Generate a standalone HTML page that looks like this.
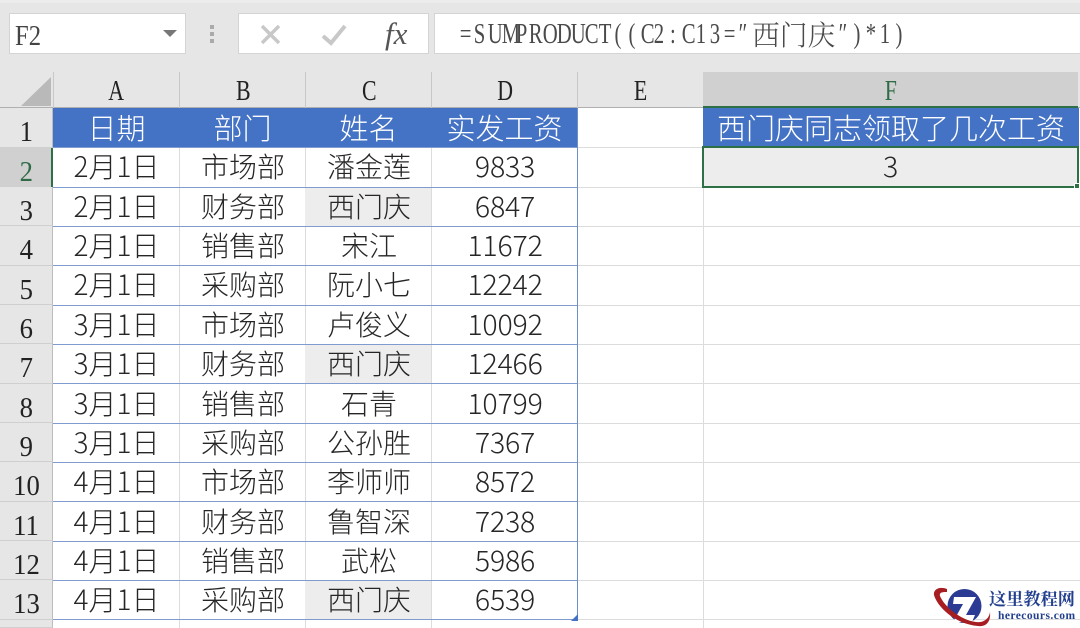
<!DOCTYPE html>
<html><head><meta charset="utf-8">
<style>
html,body{margin:0;padding:0;background:#fff}
#p{position:relative;width:1080px;height:628px;overflow:hidden;background:#fff;font-family:"Noto Sans CJK SC","Liberation Sans",sans-serif;color:#222}
#p div{position:absolute;box-sizing:border-box}
.c{text-align:center;font-size:28px;font-weight:300;line-height:36px;height:39px;white-space:nowrap;color:#262626}
.n{font-size:28.5px;letter-spacing:-.2px}
.h{color:#fff;background:#4472c4;line-height:38px!important;font-size:29px}
.ch{top:72px;height:36px;line-height:40px;text-align:center;font-family:"Liberation Serif","Noto Serif CJK SC",serif;font-size:28px;color:#222}
.ch span{display:inline-block;transform:scaleX(.78)}
.rh span{display:inline-block;transform:scaleX(.92)}
.rh{left:0;width:53px;background:#e6e6e6;text-align:center;font-family:"Liberation Serif",serif;font-size:29px;color:#222;border-bottom:1px solid #cfcfcf;border-right:1px solid #bdbdbd;line-height:48px;overflow:hidden}
.hl{height:1px;background:#dcdcdc}
.vl{width:1px;background:#dcdcdc}
.b{height:1px;background:#7f9bd0;left:53px;width:525px}
.f span{display:inline-block;width:13.9px;text-align:center;transform:scaleX(.74)}
.f{font:28px/36px "Liberation Serif",serif;color:#4a4a4a;white-space:nowrap}
</style></head><body><div id="p">
<div style="left:0;top:0;width:1080px;height:108px;background:#e6e6e6"></div>
<div style="left:0;top:0;width:1080px;height:3px;background:#ececec"></div>

<div style="left:9px;top:13px;width:177px;height:41px;background:#fff;border:1px solid #d4d4d4"></div>
<div style="left:15px;top:18px;font:29px/36px 'Liberation Serif',serif;color:#444;transform:scaleX(.85);transform-origin:left">F2</div>
<div style="left:163px;top:30px;width:0;height:0;border-left:7px solid transparent;border-right:7px solid transparent;border-top:7px solid #777"></div>
<div style="left:210px;top:25px;width:4px;height:4px;background:#aaa"></div>
<div style="left:210px;top:32px;width:4px;height:4px;background:#aaa"></div>
<div style="left:210px;top:39px;width:4px;height:4px;background:#aaa"></div>
<div style="left:238px;top:13px;width:191px;height:41px;background:#fff;border:1px solid #d4d4d4"></div>
<svg style="position:absolute;left:0;top:0" width="430" height="60"><path d="M262 26L279 43M279 26L262 43" stroke="#c8c8c8" stroke-width="3.4" fill="none"/><path d="M323 36L331 43L345 26" stroke="#c8c8c8" stroke-width="4" fill="none"/></svg>
<div style="left:385px;top:16px;font:italic 31px/36px 'Liberation Serif',serif;color:#555">fx</div>
<div style="left:434px;top:13px;width:646px;height:41px;background:#fff;border:1px solid #d4d4d4;border-right:0"></div>
<div class="f" style="left:458px;top:17px"><span>=</span><span>S</span><span>U</span><span>M</span><span>P</span><span>R</span><span>O</span><span>D</span><span>U</span><span>C</span><span>T</span><span>(</span><span>(</span><span>C</span><span>2</span><span>:</span><span>C</span><span>1</span><span>3</span><span>=</span><span>″</span></div>
<div style="left:752px;top:14px;font:27.8px/38px 'Noto Serif CJK SC',serif;font-weight:300;color:#4a4a4a;white-space:nowrap">西门庆</div>
<div class="f" style="left:836px;top:17px"><span>″</span><span>)</span><span>*</span><span>1</span><span>)</span></div>

<!-- col headers -->
<div style="left:21px;top:77px;width:0;height:0;border-left:30px solid transparent;border-bottom:29px solid #b9b9b9"></div>
<div class="ch" style="left:53px;width:127px"><span>A</span></div>
<div class="ch" style="left:180px;width:126px"><span>B</span></div>
<div class="ch" style="left:306px;width:126px"><span>C</span></div>
<div class="ch" style="left:432px;width:146px"><span>D</span></div>
<div class="ch" style="left:578px;width:125px"><span>E</span></div>
<div class="ch" style="left:703px;width:375px;background:#d0d0d0;color:#2f6b47;top:72px"><span>F</span></div>
<div style="left:0;top:107px;width:1080px;height:1px;background:#b0b0b0"></div>
<div class="vl" style="left:53px;top:72px;height:36px;background:#c8c8c8"></div>
<div class="vl" style="left:179px;top:72px;height:36px;background:#c8c8c8"></div>
<div class="vl" style="left:305px;top:72px;height:36px;background:#c8c8c8"></div>
<div class="vl" style="left:431px;top:72px;height:36px;background:#c8c8c8"></div>
<div class="vl" style="left:577px;top:72px;height:36px;background:#c8c8c8"></div>

<!-- row headers -->
<div class="rh" style="top:108px;height:40px"><span>1</span></div>
<div class="rh" style="top:148px;height:39px;background:#d0d0d0;color:#2f6b47"><span>2</span></div>
<div class="rh" style="top:187px;height:39px"><span>3</span></div>
<div class="rh" style="top:226px;height:40px"><span>4</span></div>
<div class="rh" style="top:266px;height:39px"><span>5</span></div>
<div class="rh" style="top:305px;height:39px"><span>6</span></div>
<div class="rh" style="top:344px;height:40px"><span>7</span></div>
<div class="rh" style="top:384px;height:39px"><span>8</span></div>
<div class="rh" style="top:423px;height:39px"><span>9</span></div>
<div class="rh" style="top:462px;height:40px"><span>10</span></div>
<div class="rh" style="top:502px;height:39px"><span>11</span></div>
<div class="rh" style="top:541px;height:39px"><span>12</span></div>
<div class="rh" style="top:580px;height:40px"><span>13</span></div>
<div class="rh" style="top:620px;height:8px"></div>

<!-- grid -->
<div class="vl" style="left:179px;top:148px;height:480px"></div>
<div class="vl" style="left:305px;top:148px;height:480px"></div>
<div class="vl" style="left:431px;top:148px;height:480px"></div>
<div class="vl" style="left:703px;top:108px;height:520px"></div>
<div class="hl" style="left:578px;top:147px;width:125px"></div>
<div class="hl" style="left:578px;top:187px;width:502px"></div>
<div class="hl" style="left:578px;top:226px;width:502px"></div>
<div class="hl" style="left:578px;top:265px;width:502px"></div>
<div class="hl" style="left:578px;top:305px;width:502px"></div>
<div class="hl" style="left:578px;top:344px;width:502px"></div>
<div class="hl" style="left:578px;top:383px;width:502px"></div>
<div class="hl" style="left:578px;top:423px;width:502px"></div>
<div class="hl" style="left:578px;top:462px;width:502px"></div>
<div class="hl" style="left:578px;top:501px;width:502px"></div>
<div class="hl" style="left:578px;top:541px;width:502px"></div>
<div class="hl" style="left:578px;top:580px;width:502px"></div>
<div class="hl" style="left:53px;top:619px;width:1027px"></div>

<!-- header row -->
<div class="c h" style="left:53px;top:108px;width:127px;height:40px">日期</div>
<div class="c h" style="left:179px;top:108px;width:127px;height:40px">部门</div>
<div class="c h" style="left:305px;top:108px;width:127px;height:40px">姓名</div>
<div class="c h" style="left:431px;top:108px;width:147px;height:40px">实发工资</div>
<div class="c h" style="left:703px;top:108px;width:376px;height:40px">西门庆同志领取了几次工资</div>

<!-- highlights -->
<div style="left:305px;top:188px;width:126px;height:38px;background:#ededed"></div>
<div style="left:305px;top:345px;width:126px;height:39px;background:#ededed"></div>
<div style="left:305px;top:581px;width:126px;height:38px;background:#ededed"></div>

<!-- rows -->
<div class="c" style="left:53px;top:148px;width:127px">2月1日</div><div class="c" style="left:180px;top:148px;width:126px">市场部</div><div class="c" style="left:306px;top:148px;width:126px">潘金莲</div><div class="c n" style="left:432px;top:148px;width:146px">9833</div>
<div class="c" style="left:53px;top:188px;width:127px">2月1日</div><div class="c" style="left:180px;top:188px;width:126px">财务部</div><div class="c" style="left:306px;top:188px;width:126px">西门庆</div><div class="c n" style="left:432px;top:188px;width:146px">6847</div>
<div class="c" style="left:53px;top:227px;width:127px">2月1日</div><div class="c" style="left:180px;top:227px;width:126px">销售部</div><div class="c" style="left:306px;top:227px;width:126px">宋江</div><div class="c n" style="left:432px;top:227px;width:146px">11672</div>
<div class="c" style="left:53px;top:266px;width:127px">2月1日</div><div class="c" style="left:180px;top:266px;width:126px">采购部</div><div class="c" style="left:306px;top:266px;width:126px">阮小七</div><div class="c n" style="left:432px;top:266px;width:146px">12242</div>
<div class="c" style="left:53px;top:306px;width:127px">3月1日</div><div class="c" style="left:180px;top:306px;width:126px">市场部</div><div class="c" style="left:306px;top:306px;width:126px">卢俊义</div><div class="c n" style="left:432px;top:306px;width:146px">10092</div>
<div class="c" style="left:53px;top:345px;width:127px">3月1日</div><div class="c" style="left:180px;top:345px;width:126px">财务部</div><div class="c" style="left:306px;top:345px;width:126px">西门庆</div><div class="c n" style="left:432px;top:345px;width:146px">12466</div>
<div class="c" style="left:53px;top:385px;width:127px">3月1日</div><div class="c" style="left:180px;top:385px;width:126px">销售部</div><div class="c" style="left:306px;top:385px;width:126px">石青</div><div class="c n" style="left:432px;top:385px;width:146px">10799</div>
<div class="c" style="left:53px;top:424px;width:127px">3月1日</div><div class="c" style="left:180px;top:424px;width:126px">采购部</div><div class="c" style="left:306px;top:424px;width:126px">公孙胜</div><div class="c n" style="left:432px;top:424px;width:146px">7367</div>
<div class="c" style="left:53px;top:463px;width:127px">4月1日</div><div class="c" style="left:180px;top:463px;width:126px">市场部</div><div class="c" style="left:306px;top:463px;width:126px">李师师</div><div class="c n" style="left:432px;top:463px;width:146px">8572</div>
<div class="c" style="left:53px;top:503px;width:127px">4月1日</div><div class="c" style="left:180px;top:503px;width:126px">财务部</div><div class="c" style="left:306px;top:503px;width:126px">鲁智深</div><div class="c n" style="left:432px;top:503px;width:146px">7238</div>
<div class="c" style="left:53px;top:542px;width:127px">4月1日</div><div class="c" style="left:180px;top:542px;width:126px">销售部</div><div class="c" style="left:306px;top:542px;width:126px">武松</div><div class="c n" style="left:432px;top:542px;width:146px">5986</div>
<div class="c" style="left:53px;top:581px;width:127px">4月1日</div><div class="c" style="left:180px;top:581px;width:126px">采购部</div><div class="c" style="left:306px;top:581px;width:126px">西门庆</div><div class="c n" style="left:432px;top:581px;width:146px">6539</div>

<!-- table borders -->
<div class="b" style="top:147px"></div><div class="b" style="top:187px"></div><div class="b" style="top:226px"></div><div class="b" style="top:265px"></div><div class="b" style="top:305px"></div><div class="b" style="top:344px"></div><div class="b" style="top:383px"></div><div class="b" style="top:423px"></div><div class="b" style="top:462px"></div><div class="b" style="top:501px"></div><div class="b" style="top:541px"></div><div class="b" style="top:580px"></div><div class="b" style="top:619px"></div>
<div style="left:577px;top:108px;width:1px;height:512px;background:#6f8fcb"></div>
<div style="left:571px;top:614px;width:0;height:0;border-left:7px solid transparent;border-bottom:7px solid #4472c4"></div>

<!-- selection -->
<div style="left:703px;top:106px;width:375px;height:2px;background:#2e7045"></div>
<div style="left:702px;top:146px;width:377px;height:42px;background:#ededed;border:2px solid #2e7045"></div>
<div class="c n" style="left:703px;top:148px;width:375px">3</div>
<div style="left:1074px;top:183px;width:6px;height:6px;background:#2e7045;border:1px solid #fff"></div>
<div style="left:51px;top:148px;width:2px;height:39px;background:#2e7045"></div>

<!-- logo -->
<svg style="position:absolute;left:930px;top:580px" width="64" height="48" viewBox="0 0 64 48">
<circle cx="34.5" cy="26" r="17" fill="#2b3a92"/>
<path d="M24 17H46L36 35H45L42 42H23L33 24H23Z" fill="#fff"/>
<path d="M17 9C10 6 3 9 4 15C7 26 24 44 48 46C56 47 61 42 60 32C59 40 52 43 46 42C30 40 14 26 10 16C9 12 13 12 17 12Z" fill="#a61e22"/>
</svg>
<div style="left:989px;top:587px;font:bold 17.2px/22px 'Noto Serif CJK SC',serif;color:#23408f;white-space:nowrap">这里教程网</div>
<div style="left:998px;top:608px;font:bold 11.5px/16px 'Liberation Serif',serif;color:#23408f;white-space:nowrap;letter-spacing:.45px">herecours.com</div>
</div></body></html>
